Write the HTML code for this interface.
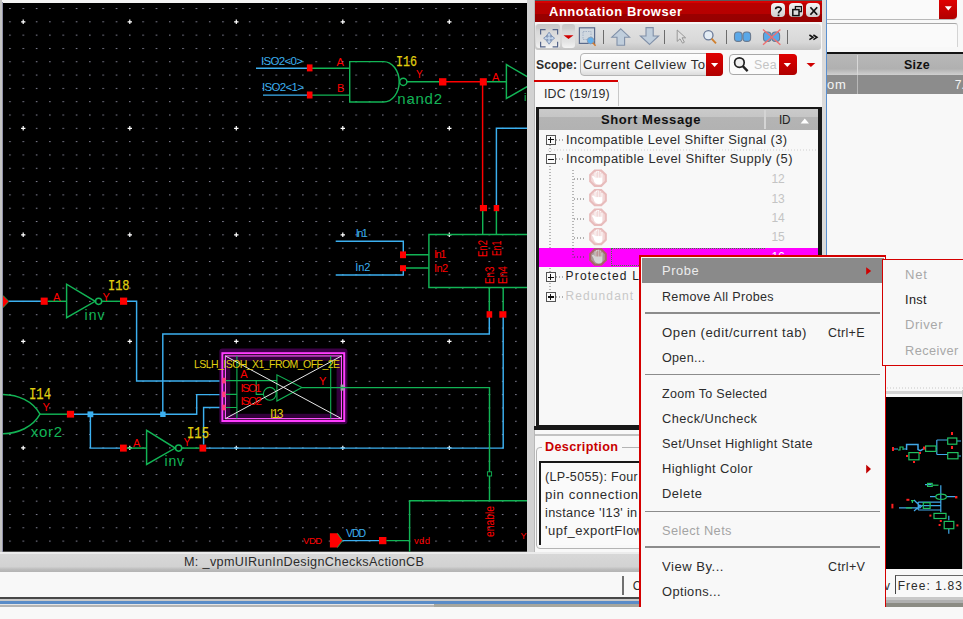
<!DOCTYPE html>
<html><head><meta charset="utf-8"><style>
html,body{margin:0;padding:0;width:963px;height:619px;overflow:hidden;background:#f8f8f8;position:relative;}
.t{position:absolute;white-space:pre;line-height:1;}
svg{position:absolute;}
</style></head><body>
<svg style="left:0;top:0" width="528" height="553" viewBox="0 0 528 553"><defs><pattern id="gd" patternUnits="userSpaceOnUse" x="9.2" y="8" width="13.315" height="13.315"><rect x="0" y="0" width="1.5" height="1" fill="#8c8ca0"/></pattern><clipPath id="cv"><rect x="3" y="3" width="524.3" height="548.7"/></clipPath></defs><rect x="0" y="0" width="528" height="553" fill="#f4f4f4"/><rect x="0" y="0" width="2" height="553" fill="#c4c4c4"/><rect x="2" y="2" width="1" height="551" fill="#9090a8"/><rect x="3" y="3" width="524.3" height="548.7" fill="#000"/><g clip-path="url(#cv)"><rect x="3" y="3" width="524.3" height="548.7" fill="url(#gd)"/><path d="M21.1,21.8H25.4M23.2,19.6V24.0" stroke="#fff" stroke-width="1.2"/><path d="M21.1,128.3H25.4M23.2,126.1V130.5" stroke="#fff" stroke-width="1.2"/><path d="M21.1,234.8H25.4M23.2,232.6V237.0" stroke="#fff" stroke-width="1.2"/><path d="M21.1,341.4H25.4M23.2,339.2V343.6" stroke="#fff" stroke-width="1.2"/><path d="M21.1,447.9H25.4M23.2,445.7V450.1" stroke="#fff" stroke-width="1.2"/><path d="M21.1,554.4H25.4M23.2,552.2V556.6" stroke="#fff" stroke-width="1.2"/><path d="M127.6,21.8H132.0M129.8,19.6V24.0" stroke="#fff" stroke-width="1.2"/><path d="M127.6,128.3H132.0M129.8,126.1V130.5" stroke="#fff" stroke-width="1.2"/><path d="M127.6,234.8H132.0M129.8,232.6V237.0" stroke="#fff" stroke-width="1.2"/><path d="M127.6,341.4H132.0M129.8,339.2V343.6" stroke="#fff" stroke-width="1.2"/><path d="M127.6,447.9H132.0M129.8,445.7V450.1" stroke="#fff" stroke-width="1.2"/><path d="M127.6,554.4H132.0M129.8,552.2V556.6" stroke="#fff" stroke-width="1.2"/><path d="M234.1,21.8H238.5M236.3,19.6V24.0" stroke="#fff" stroke-width="1.2"/><path d="M234.1,128.3H238.5M236.3,126.1V130.5" stroke="#fff" stroke-width="1.2"/><path d="M234.1,234.8H238.5M236.3,232.6V237.0" stroke="#fff" stroke-width="1.2"/><path d="M234.1,341.4H238.5M236.3,339.2V343.6" stroke="#fff" stroke-width="1.2"/><path d="M234.1,447.9H238.5M236.3,445.7V450.1" stroke="#fff" stroke-width="1.2"/><path d="M234.1,554.4H238.5M236.3,552.2V556.6" stroke="#fff" stroke-width="1.2"/><path d="M340.6,21.8H345.0M342.8,19.6V24.0" stroke="#fff" stroke-width="1.2"/><path d="M340.6,128.3H345.0M342.8,126.1V130.5" stroke="#fff" stroke-width="1.2"/><path d="M340.6,234.8H345.0M342.8,232.6V237.0" stroke="#fff" stroke-width="1.2"/><path d="M340.6,341.4H345.0M342.8,339.2V343.6" stroke="#fff" stroke-width="1.2"/><path d="M340.6,447.9H345.0M342.8,445.7V450.1" stroke="#fff" stroke-width="1.2"/><path d="M340.6,554.4H345.0M342.8,552.2V556.6" stroke="#fff" stroke-width="1.2"/><path d="M447.1,21.8H451.5M449.3,19.6V24.0" stroke="#fff" stroke-width="1.2"/><path d="M447.1,128.3H451.5M449.3,126.1V130.5" stroke="#fff" stroke-width="1.2"/><path d="M447.1,234.8H451.5M449.3,232.6V237.0" stroke="#fff" stroke-width="1.2"/><path d="M447.1,341.4H451.5M449.3,339.2V343.6" stroke="#fff" stroke-width="1.2"/><path d="M447.1,447.9H451.5M449.3,445.7V450.1" stroke="#fff" stroke-width="1.2"/><path d="M447.1,554.4H451.5M449.3,552.2V556.6" stroke="#fff" stroke-width="1.2"/><path d="M256,68.3H308M263,95.1H308" stroke="#3cb0f0" stroke-width="1.45" fill="none" /><path d="M312,68.3H349.7M312,95.1H349.7" stroke="#12b455" stroke-width="1.45" fill="none" /><rect x="306.9" y="64.4" width="5.60" height="7.00" fill="#ff0000"/><rect x="306.9" y="91.5" width="5.60" height="7.00" fill="#ff0000"/><path d="M383.6,61.6H349.7V102H383.6A15.6,20.2 0 0 0 383.6,61.6" stroke="#12b455" stroke-width="1.45" fill="none" /><circle cx="403.3" cy="81.8" r="3.6" stroke="#12b455" stroke-width="1.45" fill="none"/><path d="M407,81.7H440" stroke="#12b455" stroke-width="1.45" fill="none" /><rect x="439" y="78.2" width="7.40" height="7.30" fill="#ff0000"/><path d="M446,81.7H480" stroke="#ff0000" stroke-width="1.45" fill="none" /><rect x="479.8" y="78.2" width="7.00" height="7.30" fill="#ff0000"/><path d="M486.8,81.7H506.4" stroke="#12b455" stroke-width="1.45" fill="none" /><path d="M506.4,64.6V98.5L535.7,81.6Z" stroke="#12b455" stroke-width="1.45" fill="none" /><path d="M482.6,85V205.5" stroke="#ff0000" stroke-width="1.45" fill="none" /><rect x="479.9" y="205" width="7.10" height="6.20" fill="#ff0000"/><path d="M496.4,205.5V128.2H528" stroke="#3cb0f0" stroke-width="1.45" fill="none" /><rect x="493.7" y="205" width="5.50" height="6.20" fill="#ff0000"/><path d="M482.7,211V234.4M496.4,211V234.4" stroke="#12b455" stroke-width="1.45" fill="none" /><path d="M335.7,241.3H403.3V252M335.7,274.9H403.3V270.5" stroke="#3cb0f0" stroke-width="1.45" fill="none" /><rect x="400" y="251.4" width="6.00" height="6.80" fill="#ff0000"/><rect x="400" y="265.2" width="6.00" height="6.00" fill="#ff0000"/><path d="M406,254.8H428.9M406,268H428.9" stroke="#12b455" stroke-width="1.45" fill="none" /><path d="M528,234.4H428.9V287.5H528" stroke="#12b455" stroke-width="1.45" fill="none" /><path d="M489.3,287.5V311.5M503.2,287.5V311.5" stroke="#12b455" stroke-width="1.45" fill="none" /><rect x="486.6" y="311.2" width="5.60" height="6.50" fill="#ff0000"/><rect x="499.3" y="311.2" width="7.10" height="6.50" fill="#ff0000"/><path d="M489.3,317.5V333.9H162.8V414.3M503.2,317.5V448.1H206" stroke="#3cb0f0" stroke-width="1.45" fill="none" /><path d="M-2,295.4H3L8.9,301.4L3,307.8H-2Z" fill="#ff0000" stroke="#12b455" stroke-width="0.8"/><path d="M8.7,301.3H41" stroke="#3cb0f0" stroke-width="1.45" fill="none" /><rect x="40.7" y="297.6" width="7.00" height="7.20" fill="#ff0000"/><path d="M47.7,301.3H66.6" stroke="#12b455" stroke-width="1.45" fill="none" /><path d="M66.6,284.2V317.7L95.2,301.3Z" stroke="#12b455" stroke-width="1.45" fill="none" /><circle cx="98.6" cy="301.3" r="3.1" stroke="#12b455" stroke-width="1.45" fill="none"/><path d="M101.7,301.3H120" stroke="#12b455" stroke-width="1.45" fill="none" /><rect x="120" y="297.6" width="7.20" height="7.20" fill="#ff0000"/><path d="M127,301.3H136.6V380.9H221" stroke="#3cb0f0" stroke-width="1.45" fill="none" /><path d="M2,394.4C18,394.4 33,401 40,414.2C33,427 18,433.7 2,433.7" stroke="#12b455" stroke-width="1.45" fill="none" /><path d="M40,414.2H67" stroke="#12b455" stroke-width="1.45" fill="none" /><rect x="66.9" y="410.8" width="7.20" height="6.80" fill="#ff0000"/><path d="M74,414.3H196.7V394.6H221" stroke="#3cb0f0" stroke-width="1.45" fill="none" /><rect x="87.5" y="411.4" width="5.80" height="5.80" fill="#3cb0f0"/><rect x="160.2" y="411.6" width="5.40" height="5.40" fill="#3cb0f0"/><path d="M90.4,414.3V448.1H120" stroke="#3cb0f0" stroke-width="1.45" fill="none" /><rect x="120" y="444.6" width="6.80" height="7.00" fill="#ff0000"/><path d="M126.8,448.1H146.6" stroke="#12b455" stroke-width="1.45" fill="none" /><path d="M146.6,430.4V464.5L175.2,448.1Z" stroke="#12b455" stroke-width="1.45" fill="none" /><circle cx="178.6" cy="448.1" r="3.1" stroke="#12b455" stroke-width="1.45" fill="none"/><path d="M181.7,448.1H199.5" stroke="#12b455" stroke-width="1.45" fill="none" /><rect x="199.5" y="444.6" width="6.70" height="7.00" fill="#ff0000"/><path d="M203.6,444.6V407.5H221" stroke="#3cb0f0" stroke-width="1.45" fill="none" /><rect x="219.4" y="348.6" width="128" height="75.6" rx="3" fill="#3c0046"/><rect x="222.4" y="353.2" width="121.8" height="67.8" fill="#000" stroke="#ff3cff" stroke-width="2"/><rect x="225.4" y="356" width="116" height="62.6" fill="none" stroke="#ff50ff" stroke-width="1.4"/><rect x="228.2" y="358.8" width="110.4" height="57" fill="none" stroke="#34003c" stroke-width="4"/><path d="M236.9,356V418.6M330.7,356V418.6" stroke="#12b455" stroke-width="1.1" fill="none" /><path d="M225.4,380.6H276.9M225.4,394.4H236.9M225.4,407.5H236.9M256.2,380.6V394.4H263.5" stroke="#12b455" stroke-width="1.1" fill="none" /><circle cx="269.8" cy="393.8" r="6.4" stroke="#12b455" stroke-width="1.1" fill="none"/><path d="M276.9,374.8V401L301.9,387.6Z" stroke="#12b455" stroke-width="1.1" fill="none" /><path d="M225.4,356L341.4,418.6M341.4,356L225.4,418.6" stroke="#e8e8e8" stroke-width="1.0" fill="none" /><rect x="222.2" y="377.8" width="3.40" height="5.60" fill="#ff3c78"/><rect x="222.2" y="391.6" width="3.40" height="5.60" fill="#ff3c78"/><rect x="222.2" y="404.7" width="3.40" height="5.60" fill="#ff3c78"/><rect x="340.6" y="384.6" width="3.60" height="6.00" fill="#a0a0a8"/><path d="M301.9,387.6H489.5V500.8" stroke="#12b455" stroke-width="1.45" fill="none" /><rect x="487.4" y="471.8" width="4.2" height="4.2" fill="#000" stroke="#12b455" stroke-width="0.9"/><path d="M409.6,553V500.8H528" stroke="#12b455" stroke-width="1.45" fill="none" /><path d="M329.9,533.2H337.4L342.6,540.6L337.4,547.6H329.9Z" fill="#ff0000"/><path d="M337.4,533.2L342.6,540.6L337.4,547.6" stroke="#12b455" stroke-width="0.9" fill="none" /><path d="M342.6,540.6H379" stroke="#3cb0f0" stroke-width="1.45" fill="none" /><rect x="379" y="537" width="7.40" height="7.20" fill="#ff0000"/><path d="M386.4,540.6H409.6" stroke="#12b455" stroke-width="1.45" fill="none" /></g></svg><div class="t" style="left:261.0px;top:56.00px;font-family:'Liberation Sans', sans-serif;font-size:11.5px;font-weight:normal;color:#3cb0f0;letter-spacing:-0.674px;">ISO2&lt;0&gt;</div><div class="t" style="left:262.0px;top:82.00px;font-family:'Liberation Sans', sans-serif;font-size:11.5px;font-weight:normal;color:#3cb0f0;letter-spacing:-0.674px;">ISO2&lt;1&gt;</div><div class="t" style="left:336.6px;top:57.00px;font-family:'Liberation Sans', sans-serif;font-size:11px;font-weight:normal;color:#ff0000;letter-spacing:0.000px;">A</div><div class="t" style="left:337.0px;top:83.00px;font-family:'Liberation Sans', sans-serif;font-size:11px;font-weight:normal;color:#ff0000;letter-spacing:0.000px;">B</div><div class="t" style="left:395.7px;top:55.00px;font-family:'Liberation Mono', monospace;font-size:15px;font-weight:normal;color:#e0d010;letter-spacing:0.000px;transform-origin:0 0;transform:scaleX(0.7773);-webkit-text-stroke:0.25px currentColor;">I16</div><div class="t" style="left:416.0px;top:70.00px;font-family:'Liberation Sans', sans-serif;font-size:10px;font-weight:normal;color:#ff0000;letter-spacing:0.000px;">Y</div><div class="t" style="left:397.3px;top:91.00px;font-family:'Liberation Sans', sans-serif;font-size:15px;font-weight:normal;color:#12b455;letter-spacing:0.745px;">nand2</div><div class="t" style="left:492.0px;top:72.00px;font-family:'Liberation Sans', sans-serif;font-size:11px;font-weight:normal;color:#ff0000;letter-spacing:0.000px;">A</div><div class="t" style="left:524.0px;top:92.00px;font-family:'Liberation Sans', sans-serif;font-size:11px;font-weight:normal;color:#12b455;letter-spacing:0.000px;">i</div><div class="t" style="left:355.8px;top:228.00px;font-family:'Liberation Sans', sans-serif;font-size:11px;font-weight:normal;color:#3cb0f0;letter-spacing:-1.648px;">In1</div><div class="t" style="left:355.3px;top:262.00px;font-family:'Liberation Sans', sans-serif;font-size:11px;font-weight:normal;color:#3cb0f0;letter-spacing:-0.148px;">In2</div><div class="t" style="left:433.9px;top:249.00px;font-family:'Liberation Sans', sans-serif;font-size:11px;font-weight:normal;color:#ff0000;letter-spacing:-1.398px;">In1</div><div class="t" style="left:434.0px;top:263.00px;font-family:'Liberation Sans', sans-serif;font-size:11px;font-weight:normal;color:#ff0000;letter-spacing:-0.648px;">In2</div><div class="t" style="left:53.0px;top:292.00px;font-family:'Liberation Sans', sans-serif;font-size:11px;font-weight:normal;color:#ff0000;letter-spacing:0.000px;">A</div><div class="t" style="left:102.5px;top:292.00px;font-family:'Liberation Sans', sans-serif;font-size:11px;font-weight:normal;color:#ff0000;letter-spacing:0.000px;">Y</div><div class="t" style="left:107.5px;top:279.00px;font-family:'Liberation Mono', monospace;font-size:14px;font-weight:normal;color:#e0d010;letter-spacing:0.000px;transform-origin:0 0;transform:scaleX(0.8525);-webkit-text-stroke:0.25px currentColor;">I18</div><div class="t" style="left:84.6px;top:308.00px;font-family:'Liberation Sans', sans-serif;font-size:14px;font-weight:normal;color:#12b455;letter-spacing:0.947px;">inv</div><div class="t" style="left:28.8px;top:387.00px;font-family:'Liberation Mono', monospace;font-size:16.5px;font-weight:normal;color:#e0d010;letter-spacing:0.000px;transform-origin:0 0;transform:scaleX(0.7403);-webkit-text-stroke:0.25px currentColor;">I14</div><div class="t" style="left:42.4px;top:402.00px;font-family:'Liberation Sans', sans-serif;font-size:11px;font-weight:normal;color:#ff0000;letter-spacing:0.000px;">Y</div><div class="t" style="left:30.8px;top:424.00px;font-family:'Liberation Sans', sans-serif;font-size:15px;font-weight:normal;color:#12b455;letter-spacing:0.737px;">xor2</div><div class="t" style="left:133.0px;top:438.00px;font-family:'Liberation Sans', sans-serif;font-size:11px;font-weight:normal;color:#ff0000;letter-spacing:0.000px;">A</div><div class="t" style="left:183.5px;top:437.00px;font-family:'Liberation Sans', sans-serif;font-size:10.5px;font-weight:normal;color:#ff0000;letter-spacing:0.000px;">Y</div><div class="t" style="left:186.9px;top:426.00px;font-family:'Liberation Mono', monospace;font-size:16px;font-weight:normal;color:#e0d010;letter-spacing:0.000px;transform-origin:0 0;transform:scaleX(0.7636);-webkit-text-stroke:0.25px currentColor;">I15</div><div class="t" style="left:164.6px;top:454.00px;font-family:'Liberation Sans', sans-serif;font-size:14px;font-weight:normal;color:#12b455;letter-spacing:0.747px;">inv</div><div class="t" style="left:194.0px;top:359.00px;font-family:'Liberation Sans', sans-serif;font-size:10.5px;font-weight:normal;color:#e0d010;letter-spacing:-0.554px;">LSLH_ISOH_X1_FROM_OFF_2E</div><div class="t" style="left:240.2px;top:369.00px;font-family:'Liberation Sans', sans-serif;font-size:11px;font-weight:normal;color:#ff0000;letter-spacing:0.000px;">A</div><div class="t" style="left:240.5px;top:383.00px;font-family:'Liberation Sans', sans-serif;font-size:11.5px;font-weight:normal;color:#ff0000;letter-spacing:-1.740px;">ISO1</div><div class="t" style="left:240.5px;top:396.00px;font-family:'Liberation Sans', sans-serif;font-size:11.5px;font-weight:normal;color:#ff0000;letter-spacing:-1.573px;">ISO2</div><div class="t" style="left:319.0px;top:376.00px;font-family:'Liberation Sans', sans-serif;font-size:11px;font-weight:normal;color:#ff0000;letter-spacing:0.000px;">Y</div><div class="t" style="left:269.9px;top:408.00px;font-family:'Liberation Sans', sans-serif;font-size:12px;font-weight:normal;color:#e0d010;letter-spacing:-1.594px;">I13</div><div class="t" style="left:303.1px;top:536.00px;font-family:'Liberation Sans', sans-serif;font-size:9.5px;font-weight:normal;color:#ff0000;letter-spacing:-0.531px;">VDD</div><div class="t" style="left:346.0px;top:528.00px;font-family:'Liberation Sans', sans-serif;font-size:10.5px;font-weight:normal;color:#3cb0f0;letter-spacing:-1.086px;">VDD</div><div class="t" style="left:414.0px;top:536.00px;font-family:'Liberation Sans', sans-serif;font-size:9.5px;font-weight:normal;color:#ff0000;letter-spacing:0.336px;">vdd</div><div class="t" style="left:520.5px;top:532.00px;font-family:'Liberation Sans', sans-serif;font-size:9px;font-weight:normal;color:#ff0000;letter-spacing:0.000px;">Y</div><div class="t" style="left:476.9px;top:257.00px;font-family:'Liberation Sans', sans-serif;font-size:12.17px;font-weight:normal;color:#ff0000;letter-spacing:0.000px;transform-origin:0 0;transform:rotate(-90deg) scaleX(0.7856);">En2</div><div class="t" style="left:490.1px;top:256.00px;font-family:'Liberation Sans', sans-serif;font-size:13.33px;font-weight:normal;color:#ff0000;letter-spacing:0.000px;transform-origin:0 0;transform:rotate(-90deg) scaleX(0.6493);">En1</div><div class="t" style="left:483.8px;top:283.60px;font-family:'Liberation Sans', sans-serif;font-size:12.32px;font-weight:normal;color:#ff0000;letter-spacing:0.000px;transform-origin:0 0;transform:rotate(-90deg) scaleX(0.7937);">En3</div><div class="t" style="left:496.6px;top:284.00px;font-family:'Liberation Sans', sans-serif;font-size:12.9px;font-weight:normal;color:#ff0000;letter-spacing:0.000px;transform-origin:0 0;transform:rotate(-90deg) scaleX(0.7847);">En4</div><div class="t" style="left:484.0px;top:536.90px;font-family:'Liberation Sans', sans-serif;font-size:12.17px;font-weight:normal;color:#ff0000;letter-spacing:0.000px;transform-origin:0 0;transform:rotate(-90deg) scaleX(0.8490);">enable</div><div style="position:absolute;left:527.3px;top:0px;width:6.5px;height:553px;background:#d2d2d2;"></div><div style="position:absolute;left:533.8px;top:0px;width:0.8px;height:553px;background:#b8b8b8;"></div><div style="position:absolute;left:534.6px;top:0px;width:291.4px;height:553px;background:#f8f8f8;"></div><div style="position:absolute;left:821.5px;top:0px;width:4.3px;height:553px;background:#dadada;"></div><div style="position:absolute;left:825.6px;top:0px;width:1.2px;height:553px;background:#5a90d0;"></div><div style="position:absolute;left:534.6px;top:0px;width:287px;height:1.2px;background:#5a5a5a;"></div><div style="position:absolute;left:534.6px;top:1.2px;width:287px;height:20.4px;background:linear-gradient(#dc0000 0,#d80000 7%,#b80000 12%,#b60000 60%,#9a0000 63%,#960000 100%);"></div><div style="position:absolute;left:534.6px;top:21.5px;width:287px;height:1.0px;background:#585e60;"></div><div class="t" style="left:549.3px;top:6.00px;font-family:'Liberation Sans', sans-serif;font-size:12px;font-weight:bold;color:#fff;letter-spacing:0.499px;transform-origin:0 0;transform:scaleX(1.0799);">Annotation Browser</div><div style="position:absolute;left:771.4px;top:3.4px;width:13.6px;height:13.8px;background:linear-gradient(#f4f4f4,#d0d0d0);border-radius:4px;"></div><div style="position:absolute;left:789.0px;top:3.4px;width:13.6px;height:13.8px;background:linear-gradient(#f4f4f4,#d0d0d0);border-radius:4px;"></div><div style="position:absolute;left:806.2px;top:3.4px;width:13.6px;height:13.8px;background:linear-gradient(#f4f4f4,#d0d0d0);border-radius:4px;"></div><svg style="left:771px;top:3px" width="50" height="15" viewBox="0 0 50 15"><path d="M4.6,6.2C4.6,3.6 10.2,3.4 10.2,6C10.2,7.8 7.6,8 7.4,10.4" stroke="#111" stroke-width="1.6" fill="none"/><rect x="6.6" y="11.6" width="1.8" height="1.6" fill="#111"/><rect x="24.4" y="3.6" width="6" height="5" fill="none" stroke="#111" stroke-width="1.3"/><rect x="21.8" y="6.6" width="6.2" height="6" fill="#ddd" stroke="#111" stroke-width="1.5"/><path d="M39.4,4.2L46.2,11.8M46.2,4.2L39.4,11.8" stroke="#111" stroke-width="1.7"/></svg><div style="position:absolute;left:534.6px;top:22.4px;width:287px;height:1.8px;background:#f6f6f6;"></div><div style="position:absolute;left:535.4px;top:24.2px;width:286px;height:25.4px;background:linear-gradient(#e2e2e2,#d8d8d8 70%,#c4c4c4);border-radius:3px;"></div><div style="position:absolute;left:536.2px;top:24.4px;width:23.6px;height:23.8px;background:linear-gradient(#c6c6c6,#cccccc 18%,#d8d8d8 30%,#e4e4e4 75%,#f4f4f4);border-radius:3px;"></div><div style="position:absolute;left:561.6px;top:24.4px;width:13px;height:23.8px;background:linear-gradient(#c6c6c6,#cccccc 18%,#d8d8d8 30%,#e4e4e4 75%,#f4f4f4);border-radius:3px;"></div><div style="position:absolute;left:602.9px;top:30px;width:1.2px;height:13.8px;background:#6c6c6c;"></div><div style="position:absolute;left:664.1999999999999px;top:30px;width:1.2px;height:13.8px;background:#6c6c6c;"></div><div style="position:absolute;left:725.6999999999999px;top:30px;width:1.2px;height:13.8px;background:#6c6c6c;"></div><div style="position:absolute;left:786.6px;top:30px;width:1.2px;height:13.8px;background:#6c6c6c;"></div><svg style="left:534px;top:22px" width="288" height="28" viewBox="0 0 288 28"><g stroke="#55658a" stroke-width="1.2" fill="none"><path d="M6.6,12.6V7.6H11.6M18.6,7.6H23.6V12.6M23.6,19.8V24.8H18.6M11.6,24.8H6.6V19.8"/></g><path d="M15.1,10.2L17.6,13.6H16.2V15H17.6V13.8L20.6,16.2L17.6,18.6V17.4H16.2V18.8H17.6L15.1,22.2L12.6,18.8H14V17.4H12.6V18.6L9.6,16.2L12.6,13.8V15H14V13.6H12.6Z" fill="#c4d4e8" stroke="#7088b0" stroke-width="0.8"/><path d="M29.5,13.2H39.5L34.5,17Z" fill="#d00000"/><rect x="45.4" y="5.8" width="15.2" height="15.6" fill="#d0d8e0" stroke="#5a6a8a" stroke-width="1.2"/><path d="M49,9.5H57V17.5H49Z" fill="none" stroke="#98a8c0" stroke-width="0.8" stroke-dasharray="1.5,1"/><circle cx="56.6" cy="18.6" r="3.3" fill="#60b0ee" stroke="#8898b0" stroke-width="0.9"/><path d="M58.8,20.8L61.6,23.8" stroke="#d07a30" stroke-width="1.6"/><path d="M86.8,6.8L95.6,15.2H90.6V23.2H83V15.2H77.8Z" fill="#c0cedc" stroke="#8090a8" stroke-width="1.1"/><path d="M115.6,22.4L124.6,14H119.2V5.6H112V14H106.4Z" fill="#c0cedc" stroke="#8090a8" stroke-width="1.1"/><path d="M143.2,8V19.4L146,16.8L148.6,21.2L150.4,20.2L148,15.8H151.6Z" fill="#e0e0e0" stroke="#909090" stroke-width="0.9"/><circle cx="174.4" cy="13.2" r="4.6" fill="#e4ecf4" stroke="#6a7a98" stroke-width="1.3"/><path d="M177.6,16.6L182,21.4" stroke="#d08030" stroke-width="1.9"/><g fill="#5aa8e8" stroke="#6a7a90" stroke-width="1.1"><rect x="200.5" y="10" width="7.6" height="9.4" rx="3.2"/><rect x="209" y="10" width="7.6" height="9.4" rx="3.2"/></g><g fill="#5aa8e8" stroke="#6a7a90" stroke-width="1.1"><rect x="229.5" y="10" width="7.6" height="9.4" rx="3.2"/><rect x="238" y="10" width="7.6" height="9.4" rx="3.2"/></g><path d="M229,7.4L246.4,22.8M246.4,7.4L229,22.8" stroke="#f07070" stroke-width="1.4"/><path d="M275.4,13L279,15.3L275.4,17.6M279.4,13L283,15.3L279.4,17.6" stroke="#111" stroke-width="1.5" fill="none"/></svg><div class="t" style="left:535.5px;top:59.00px;font-family:'Liberation Sans', sans-serif;font-size:12px;font-weight:bold;color:#2c2c2c;letter-spacing:0.097px;transform-origin:0 0;transform:scaleX(1.0123);">Scope:</div><div style="position:absolute;left:580.2px;top:52.8px;width:143.3px;height:23.4px;background:linear-gradient(#fdfdfd,#f2f2f2 70%,#dcdcdc);border-radius:4px;border:1px solid #b4b4b4;box-sizing:border-box;"></div><div class="t" style="left:583.0px;top:59.00px;font-family:'Liberation Sans', sans-serif;font-size:12px;font-weight:normal;color:#2c2c2c;letter-spacing:0.464px;transform-origin:0 0;transform:scaleX(1.0875);">Current Cellview To</div><div style="position:absolute;left:706.2px;top:53.3px;width:17.3px;height:22.6px;background:linear-gradient(#e00000,#b00000);border-radius:0 4px 4px 0;"></div><div style="position:absolute;left:728.8px;top:54.2px;width:68px;height:21.2px;background:#fbfbfb;border-radius:4px;border:1px solid #a8a8a8;box-sizing:border-box;"></div><svg style="left:732px;top:56px" width="20" height="18" viewBox="0 0 20 18"><circle cx="7.4" cy="6.6" r="4.8" fill="#f0f0f0" stroke="#222" stroke-width="1.7"/><path d="M10.8,10.2L15.6,15.2" stroke="#222" stroke-width="2.4"/></svg><div class="t" style="left:753.6px;top:59.00px;font-family:'Liberation Sans', sans-serif;font-size:12px;font-weight:normal;color:#c4c4c4;letter-spacing:0.278px;transform-origin:0 0;transform:scaleX(1.0267);">Sea</div><div style="position:absolute;left:778.6px;top:54.2px;width:18.2px;height:21.2px;background:linear-gradient(#e00000,#b00000);border-radius:0 4px 4px 0;"></div><svg style="left:705px;top:60px" width="115" height="10" viewBox="0 0 115 10"><path d="M6,3H13.2L9.6,7Z" fill="#fff"/><path d="M78.6,3H86L82.3,7Z" fill="#fff"/><path d="M101.5,3H110.3L105.9,7Z" fill="#d00000"/></svg><div style="position:absolute;left:533.9px;top:79.6px;width:84.1px;height:2.4px;background:#d40000;"></div><div style="position:absolute;left:617.6px;top:82px;width:0.9px;height:24px;background:#c8c8c8;"></div><div class="t" style="left:543.7px;top:88.00px;font-family:'Liberation Sans', sans-serif;font-size:12px;font-weight:normal;color:#2c2c2c;letter-spacing:0.178px;transform-origin:0 0;transform:scaleX(1.0296);">IDC (19/19)</div><div style="position:absolute;left:536.4px;top:107px;width:285.2px;height:323px;background:#181818;"></div><div style="position:absolute;left:538.7px;top:109.3px;width:278.9px;height:316.2px;background:#f8f8f8;"></div><div style="position:absolute;left:538.7px;top:109.3px;width:278.9px;height:20.3px;background:linear-gradient(#cacaca 0,#c6c6c6 36%,#b4b4b4 40%,#b2b2b2 100%);"></div><div style="position:absolute;left:764.4px;top:110px;width:1.2px;height:19px;background:#d4d4d4;"></div><div class="t" style="left:600.8px;top:114.00px;font-family:'Liberation Sans', sans-serif;font-size:12px;font-weight:bold;color:#111;letter-spacing:0.544px;transform-origin:0 0;transform:scaleX(1.0828);">Short Message</div><div class="t" style="left:778.9px;top:114.00px;font-family:'Liberation Sans', sans-serif;font-size:12px;font-weight:normal;color:#222;letter-spacing:-0.308px;transform-origin:0 0;transform:scaleX(0.9750);">ID</div><svg style="left:800px;top:118px" width="10" height="6" viewBox="0 0 10 6"><path d="M0.6,5.4L4.8,0.6L9,5.4Z" fill="#fff"/></svg><svg style="left:548px;top:149.2px" width="269" height="2"><path d="M0,1H269" stroke="#d0d0d0" stroke-width="1" stroke-dasharray="1,2"/></svg><svg style="left:549px;top:145px" width="2" height="147"><path d="M1,0V147" stroke="#777" stroke-width="1" stroke-dasharray="1,2"/></svg><svg style="left:556px;top:138.6px" width="7" height="2"><path d="M0,1H7" stroke="#666" stroke-width="1" stroke-dasharray="1,2"/></svg><svg style="left:556px;top:158.2px" width="7" height="2"><path d="M0,1H7" stroke="#666" stroke-width="1" stroke-dasharray="1,2"/></svg><svg style="left:556px;top:276.3px" width="7" height="2"><path d="M0,1H7" stroke="#666" stroke-width="1" stroke-dasharray="1,2"/></svg><svg style="left:556px;top:295.8px" width="7" height="2"><path d="M0,1H7" stroke="#666" stroke-width="1" stroke-dasharray="1,2"/></svg><svg style="left:572px;top:170px" width="2" height="87.5"><path d="M1,0V87.5" stroke="#777" stroke-width="1" stroke-dasharray="1,2"/></svg><svg style="left:574px;top:178.4px" width="12" height="2"><path d="M0,1H12" stroke="#666" stroke-width="1" stroke-dasharray="1,2"/></svg><svg style="left:574px;top:197.7px" width="12" height="2"><path d="M0,1H12" stroke="#666" stroke-width="1" stroke-dasharray="1,2"/></svg><svg style="left:574px;top:217.5px" width="12" height="2"><path d="M0,1H12" stroke="#666" stroke-width="1" stroke-dasharray="1,2"/></svg><svg style="left:574px;top:236.8px" width="12" height="2"><path d="M0,1H12" stroke="#666" stroke-width="1" stroke-dasharray="1,2"/></svg><svg style="left:574px;top:256.3px" width="12" height="2"><path d="M0,1H12" stroke="#666" stroke-width="1" stroke-dasharray="1,2"/></svg><div style="position:absolute;left:538.7px;top:247.9px;width:278.9px;height:19.5px;background:#ff00ff;"></div><div style="position:absolute;left:610.7px;top:248.4px;width:154px;height:18px;box-sizing:border-box;border:1px dotted #3a8a3a;border-right:none"></div><svg style="left:572px;top:248px" width="2" height="9.5"><path d="M1,0V9.5" stroke="#444" stroke-width="1" stroke-dasharray="1,2"/></svg><svg style="left:574px;top:256.3px" width="12" height="2"><path d="M0,1H12" stroke="#444" stroke-width="1" stroke-dasharray="1,2"/></svg><div style="position:absolute;left:545.6px;top:134.6px;width:10px;height:10px;box-sizing:border-box;border:1px solid #555;background:#fafafa"></div><div style="position:absolute;left:547.6px;top:138.9px;width:6px;height:1.4px;background:#111"></div><div style="position:absolute;left:549.9px;top:136.6px;width:1.4px;height:6px;background:#111"></div><div style="position:absolute;left:545.6px;top:154.4px;width:10px;height:10px;box-sizing:border-box;border:1px solid #555;background:#fafafa"></div><div style="position:absolute;left:547.6px;top:158.70000000000002px;width:6px;height:1.4px;background:#111"></div><div style="position:absolute;left:545.7px;top:272.2px;width:10px;height:10px;box-sizing:border-box;border:1px solid #555;background:#fafafa"></div><div style="position:absolute;left:547.7px;top:276.5px;width:6px;height:1.4px;background:#111"></div><div style="position:absolute;left:550.0px;top:274.2px;width:1.4px;height:6px;background:#111"></div><div style="position:absolute;left:545.7px;top:292px;width:10px;height:10px;box-sizing:border-box;border:1px solid #555;background:#fafafa"></div><div style="position:absolute;left:547.7px;top:296.3px;width:6px;height:1.4px;background:#111"></div><div style="position:absolute;left:550.0px;top:294px;width:1.4px;height:6px;background:#111"></div><div class="t" style="left:565.5px;top:134.00px;font-family:'Liberation Sans', sans-serif;font-size:12px;font-weight:normal;color:#2c2c2c;letter-spacing:0.365px;transform-origin:0 0;transform:scaleX(1.0732);">Incompatible Level Shifter Signal (3)</div><div class="t" style="left:565.5px;top:153.00px;font-family:'Liberation Sans', sans-serif;font-size:12px;font-weight:normal;color:#2c2c2c;letter-spacing:0.392px;transform-origin:0 0;transform:scaleX(1.0775);">Incompatible Level Shifter Supply (5)</div><div class="t" style="left:565.5px;top:270.00px;font-family:'Liberation Sans', sans-serif;font-size:12px;font-weight:normal;color:#222;letter-spacing:0.000px;letter-spacing:1.2px">Protected Level Shifter</div><div class="t" style="left:565.5px;top:290.00px;font-family:'Liberation Sans', sans-serif;font-size:12px;font-weight:normal;color:#c8c8c8;letter-spacing:0.000px;letter-spacing:1.1px">Redundant Level Shifter</div><svg style="left:583.5px;top:160px" width="30" height="110" viewBox="0 0 30 110"><polygon points="22.87,21.80 17.67,26.88 10.33,26.88 5.13,21.80 5.13,14.60 10.33,9.52 17.67,9.52 22.87,14.60" fill="#e8bcbc"/><polygon points="20.84,20.96 16.83,24.85 11.17,24.85 7.16,20.96 7.16,15.44 11.17,11.55 16.83,11.55 20.84,15.44" fill="#f2d8d8"/><path d="M9.4,19.2L7.8,16.6L9.4,15.8L10.6,17.4V12.4H12.1V16.7V11.2H13.7V16.7V11.0H15.3V16.7V12.0H16.9V16.7V13.6H18.4V21.4Q18.4,24.6 14.4,24.6Q10.6,24.6 9.4,19.2Z" fill="#ffffff"/><path d="M12.1,12.7V17.7M13.7,11.7V17.7M15.3,11.7V17.7M16.9,12.7V17.7" stroke="#e8bcbc" stroke-width="0.7"/><polygon points="22.87,41.20 17.67,46.28 10.33,46.28 5.13,41.20 5.13,34.00 10.33,28.92 17.67,28.92 22.87,34.00" fill="#e8bcbc"/><polygon points="20.84,40.36 16.83,44.25 11.17,44.25 7.16,40.36 7.16,34.84 11.17,30.95 16.83,30.95 20.84,34.84" fill="#f2d8d8"/><path d="M9.4,38.6L7.8,36.0L9.4,35.2L10.6,36.8V31.8H12.1V36.1V30.6H13.7V36.1V30.4H15.3V36.1V31.4H16.9V36.1V33.0H18.4V40.8Q18.4,44.0 14.4,44.0Q10.6,44.0 9.4,38.6Z" fill="#ffffff"/><path d="M12.1,32.1V37.1M13.7,31.1V37.1M15.3,31.1V37.1M16.9,32.1V37.1" stroke="#e8bcbc" stroke-width="0.7"/><polygon points="22.87,60.90 17.67,65.98 10.33,65.98 5.13,60.90 5.13,53.70 10.33,48.62 17.67,48.62 22.87,53.70" fill="#e8bcbc"/><polygon points="20.84,60.06 16.83,63.95 11.17,63.95 7.16,60.06 7.16,54.54 11.17,50.65 16.83,50.65 20.84,54.54" fill="#f2d8d8"/><path d="M9.4,58.3L7.8,55.7L9.4,54.9L10.6,56.5V51.5H12.1V55.8V50.3H13.7V55.8V50.1H15.3V55.8V51.1H16.9V55.8V52.7H18.4V60.5Q18.4,63.7 14.4,63.7Q10.6,63.7 9.4,58.3Z" fill="#ffffff"/><path d="M12.1,51.8V56.8M13.7,50.8V56.8M15.3,50.8V56.8M16.9,51.8V56.8" stroke="#e8bcbc" stroke-width="0.7"/><polygon points="22.87,80.20 17.67,85.28 10.33,85.28 5.13,80.20 5.13,73.00 10.33,67.92 17.67,67.92 22.87,73.00" fill="#e8bcbc"/><polygon points="20.84,79.36 16.83,83.25 11.17,83.25 7.16,79.36 7.16,73.84 11.17,69.95 16.83,69.95 20.84,73.84" fill="#f2d8d8"/><path d="M9.4,77.6L7.8,75.0L9.4,74.2L10.6,75.8V70.8H12.1V75.1V69.6H13.7V75.1V69.4H15.3V75.1V70.4H16.9V75.1V72.0H18.4V79.8Q18.4,83.0 14.4,83.0Q10.6,83.0 9.4,77.6Z" fill="#ffffff"/><path d="M12.1,71.1V76.1M13.7,70.1V76.1M15.3,70.1V76.1M16.9,71.1V76.1" stroke="#e8bcbc" stroke-width="0.7"/><polygon points="22.87,100.60 17.67,105.68 10.33,105.68 5.13,100.60 5.13,93.40 10.33,88.32 17.67,88.32 22.87,93.40" fill="#a86464"/><polygon points="20.84,99.76 16.83,103.65 11.17,103.65 7.16,99.76 7.16,94.24 11.17,90.35 16.83,90.35 20.84,94.24" fill="#a89898"/><path d="M9.4,98.0L7.8,95.4L9.4,94.6L10.6,96.2V91.2H12.1V95.5V90.0H13.7V95.5V89.8H15.3V95.5V90.8H16.9V95.5V92.4H18.4V100.2Q18.4,103.4 14.4,103.4Q10.6,103.4 9.4,98.0Z" fill="#d4d4d4"/><path d="M12.1,91.5V96.5M13.7,90.5V96.5M15.3,90.5V96.5M16.9,91.5V96.5" stroke="#a86464" stroke-width="0.7"/></svg><div class="t" style="left:771.4px;top:173.00px;font-family:'Liberation Sans', sans-serif;font-size:12px;font-weight:normal;color:#c4c4c4;letter-spacing:0.000px;">12</div><div class="t" style="left:771.4px;top:193.00px;font-family:'Liberation Sans', sans-serif;font-size:12px;font-weight:normal;color:#c4c4c4;letter-spacing:0.000px;">13</div><div class="t" style="left:771.4px;top:212.00px;font-family:'Liberation Sans', sans-serif;font-size:12px;font-weight:normal;color:#c4c4c4;letter-spacing:0.000px;">14</div><div class="t" style="left:771.4px;top:231.00px;font-family:'Liberation Sans', sans-serif;font-size:12px;font-weight:normal;color:#c4c4c4;letter-spacing:0.000px;">15</div><div class="t" style="left:771.4px;top:251.00px;font-family:'Liberation Sans', sans-serif;font-size:12px;font-weight:normal;color:#ffffff;letter-spacing:0.000px;">16</div><div style="position:absolute;left:534.4px;top:425.5px;width:287.2px;height:4.2px;background:#181818;"></div><div style="position:absolute;left:534.6px;top:434.4px;width:287px;height:1.6px;background:#c2c2c2;"></div><div style="position:absolute;left:535.6px;top:446.5px;width:330px;height:102px;box-sizing:border-box;border:1px solid #b4b4b4;border-radius:4px"></div><div style="position:absolute;left:542px;top:440px;width:80px;height:10px;background:#f8f8f8;"></div><div class="t" style="left:545.2px;top:441.00px;font-family:'Liberation Sans', sans-serif;font-size:12px;font-weight:bold;color:#c80000;letter-spacing:0.332px;transform-origin:0 0;transform:scaleX(1.0529);">Description</div><div style="position:absolute;left:539.3px;top:460.9px;width:300px;height:84.5px;background:#181818;"></div><div style="position:absolute;left:541.3px;top:462.9px;width:298px;height:82px;background:#fafafa;"></div><div class="t" style="left:545.3px;top:471.00px;font-family:'Liberation Sans', sans-serif;font-size:12px;font-weight:normal;color:#2c2c2c;letter-spacing:0.275px;transform-origin:0 0;transform:scaleX(1.0463);">(LP-5055): Fou</div><div class="t" style="left:633.4px;top:471.00px;font-family:'Liberation Sans', sans-serif;font-size:12px;font-weight:normal;color:#2c2c2c;letter-spacing:0.000px;">r</div><div class="t" style="left:545.3px;top:489.00px;font-family:'Liberation Sans', sans-serif;font-size:12px;font-weight:normal;color:#2c2c2c;letter-spacing:0.552px;transform-origin:0 0;transform:scaleX(1.1021);">pin connection</div><div class="t" style="left:545.3px;top:507.00px;font-family:'Liberation Sans', sans-serif;font-size:12px;font-weight:normal;color:#2c2c2c;letter-spacing:0.301px;transform-origin:0 0;transform:scaleX(1.0624);">instance 'I13' in</div><div class="t" style="left:545.3px;top:525.00px;font-family:'Liberation Sans', sans-serif;font-size:12px;font-weight:normal;color:#2c2c2c;letter-spacing:0.452px;transform-origin:0 0;transform:scaleX(1.0841);">'upf_exportFlo</div><div class="t" style="left:633.4px;top:525.00px;font-family:'Liberation Sans', sans-serif;font-size:12px;font-weight:normal;color:#2c2c2c;letter-spacing:0.000px;">w</div><div style="position:absolute;left:826.8px;top:0px;width:136.2px;height:553px;background:#f8f8f8;"></div><div style="position:absolute;left:827px;top:0px;width:130px;height:19.7px;background:#fafafa;border-bottom:1px solid #b8b8b8;border-right:1px solid #c8c8c8;box-sizing:border-box;border-radius:0 0 4px 0"></div><div style="position:absolute;left:938.6px;top:0px;width:18.2px;height:19.4px;background:linear-gradient(#e00000,#b00000);border-radius:0 0 4px 0;"></div><svg style="left:944px;top:5px" width="9" height="7" viewBox="0 0 9 7"><path d="M0.8,1.2H7.8L4.3,5.4Z" fill="#fff"/></svg><div style="position:absolute;left:827px;top:23.4px;width:131px;height:23.4px;background:#fafafa;border-top:1.2px solid #a8a8a8;border-right:1px solid #d4d4d4;box-sizing:border-box;border-radius:0 3px 0 0"></div><div style="position:absolute;left:827px;top:51.7px;width:136px;height:2.4px;background:#141414;"></div><div style="position:absolute;left:827px;top:54.1px;width:136px;height:21px;background:linear-gradient(#b8b8b8,#b0b0b0 70%,#d0d0d0);"></div><div style="position:absolute;left:856.6px;top:55px;width:1.2px;height:20px;background:#d8d8d8;"></div><div class="t" style="left:904.3px;top:59.00px;font-family:'Liberation Sans', sans-serif;font-size:12px;font-weight:bold;color:#111;letter-spacing:0.271px;transform-origin:0 0;transform:scaleX(1.0351);">Size</div><div style="position:absolute;left:827px;top:75.1px;width:136px;height:18.6px;background:#8c8c8c;"></div><div style="position:absolute;left:856.6px;top:75.1px;width:1px;height:18.6px;background:#b8b8b8;"></div><div class="t" style="left:827.0px;top:79.00px;font-family:'Liberation Sans', sans-serif;font-size:12.5px;font-weight:normal;color:#f4f4f4;letter-spacing:0.638px;transform-origin:0 0;transform:scaleX(1.0381);">om</div><div class="t" style="left:954.7px;top:79.00px;font-family:'Liberation Sans', sans-serif;font-size:12px;font-weight:normal;color:#f4f4f4;letter-spacing:0.000px;">7.</div><svg style="left:827px;top:386.6px" width="136" height="2"><path d="M0,1H136" stroke="#c8c8c8" stroke-width="1" stroke-dasharray="1,2"/></svg><div style="position:absolute;left:827px;top:390.6px;width:136px;height:3.4px;background:#d4d4d4;"></div><div style="position:absolute;left:886px;top:397.3px;width:75.6px;height:171.7px;background:#000;"></div><div style="position:absolute;left:961.6px;top:390px;width:1.4px;height:180px;background:#c8c8c8;"></div><svg style="left:886px;top:397px" width="76" height="172" viewBox="886 397 76 172"><g fill="none" stroke-width="1.2"><path d="M893,449H898M903,449H906.6M936,448.6H936.8M936.8,440V454.5M936.8,440H947.7M936.8,454.5H947.7M957,441H961M958,456H961" stroke="#40a8e8"/><path d="M906.6,450V444.4H918V449.6L920.4,450.6L924,448.6" stroke="#40a8e8" stroke-width="1.5"/><path d="M898,450H900V447H903V450" stroke="#20c060"/><rect x="908.9" y="452.6" width="10.1" height="7.2" stroke="#20c060"/><rect x="925.6" y="446" width="10.4" height="5.4" stroke="#20c060"/><rect x="947.7" y="438" width="9.1" height="6.2" stroke="#20c060"/><rect x="947.7" y="452.6" width="10.3" height="6.2" stroke="#20c060"/><path d="M925,484.6H931.6" stroke="#40a8e8"/><rect x="927.6" y="483.4" width="4.6" height="3" stroke="#20c060"/><path d="M933,485.2H938.5" stroke="#20c060"/><path d="M940.8,485.2V512.3M930,496.6H935.8M946.5,496.6H955M918.2,502.1H940.8M918.2,510H940.8M918.2,502.1V510M899,507.8H920L922,505.6H940.8M914,500L920,506M914,511L921,505M948.8,515.7V520.2M948.8,528.7V533.8" stroke="#40a8e8"/><ellipse cx="941.1" cy="496.8" rx="5.3" ry="2.6" stroke="#20c060"/><rect x="923.3" y="502.7" width="6.8" height="5.7" stroke="#20c060"/><rect x="934" y="513.4" width="12" height="5.1" stroke="#20c060"/><rect x="944.2" y="521.4" width="9.6" height="7.3" stroke="#20c060"/><path d="M906,507.8H912M911,500.6H914M912.4,500.6V503" stroke="#20c060"/></g><g fill="#ff2020"><rect x="892" y="447" width="2" height="4"/><rect x="923" y="446.6" width="2.4" height="3"/><rect x="906" y="455" width="2" height="2"/><rect x="919" y="452" width="2" height="2"/><rect x="951" y="432" width="2" height="3"/><rect x="951" y="446" width="2" height="3"/><rect x="913" y="461" width="2" height="2"/><rect x="891.4" y="503.8" width="2" height="4.6"/><rect x="955" y="496" width="2.4" height="2.4"/><rect x="929.4" y="514.6" width="2" height="2"/><rect x="939.8" y="520" width="2" height="2"/><rect x="938.6" y="524" width="2" height="2"/><rect x="956.4" y="524.4" width="2" height="2"/><rect x="906.4" y="498.8" width="3" height="2"/></g></svg><div style="position:absolute;left:0px;top:551.7px;width:886px;height:67.3px;background:#f8f8f8;"></div><div style="position:absolute;left:886px;top:597.2px;width:77px;height:21.8px;background:#f8f8f8;"></div><div style="position:absolute;left:0px;top:551.7px;width:640px;height:2px;background:#ececec;"></div><div style="position:absolute;left:0px;top:553.6px;width:640px;height:18.9px;background:linear-gradient(#d8d8d8,#d2d2d2 70%,#bcbcbc 85%,#b4b4b4);"></div><div class="t" style="left:184.0px;top:556.00px;font-family:'Liberation Sans', sans-serif;font-size:12px;font-weight:normal;color:#2c2c2c;letter-spacing:0.325px;transform-origin:0 0;transform:scaleX(1.0519);">M: _vpmUIRunInDesignChecksActionCB</div><div style="position:absolute;left:622.4px;top:576.4px;width:1.2px;height:19.1px;background:#707070;"></div><div class="t" style="left:632.8px;top:580.00px;font-family:'Liberation Sans', sans-serif;font-size:12px;font-weight:normal;color:#2c2c2c;letter-spacing:0.000px;">C</div><div style="position:absolute;left:0px;top:597.2px;width:963px;height:1.8px;background:#484848;"></div><div style="position:absolute;left:0px;top:599px;width:963px;height:2.2px;background:#c8c8c8;"></div><div style="position:absolute;left:0px;top:601.2px;width:963px;height:2.4px;background:#5a8cc8;"></div><div style="position:absolute;left:0px;top:603.6px;width:434px;height:1.2px;background:#e4e4e4;"></div><div style="position:absolute;left:0px;top:604.8px;width:434px;height:2.6px;background:#b4b4b4;"></div><div style="position:absolute;left:434px;top:603.6px;width:529px;height:3.9px;background:#a6a69e;"></div><div style="position:absolute;left:886px;top:569px;width:77px;height:28.2px;background:#f8f8f8;"></div><div style="position:absolute;left:895.2px;top:575.3px;width:80px;height:19.2px;box-sizing:border-box;border-left:1px solid #444;border-top:1px solid #666"></div><div class="t" style="left:897.7px;top:580.00px;font-family:'Liberation Sans', sans-serif;font-size:12px;font-weight:normal;color:#2c2c2c;letter-spacing:0.000px;letter-spacing:1.05px">Free: 1.837</div><div class="t" style="left:884.0px;top:580.00px;font-family:'Liberation Sans', sans-serif;font-size:12px;font-weight:normal;color:#2c2c2c;letter-spacing:0.000px;">v</div><div style="position:absolute;left:886px;top:597.2px;width:77px;height:10.2px;background:linear-gradient(#c8c8c8 0,#c8c8c8 30%,#b0b0b0 30%,#b0b0b0 60%,#8c8c84 60%);"></div><div style="position:absolute;left:639.2px;top:255.2px;width:246.8px;height:352.2px;background:#f8f8f8;"></div><div style="position:absolute;left:639.2px;top:255.2px;width:246.8px;height:1.4px;background:#d40000;"></div><div style="position:absolute;left:639.3px;top:255.2px;width:1.3px;height:352.2px;background:#d40000;"></div><div style="position:absolute;left:884.6px;top:255.2px;width:1.4px;height:352.2px;background:#d40000;"></div><div style="position:absolute;left:642.1px;top:258.1px;width:242px;height:25.4px;background:#8a8a8a;"></div><div class="t" style="left:662.4px;top:265.00px;font-family:'Liberation Sans', sans-serif;font-size:12px;font-weight:normal;color:#ececec;letter-spacing:0.544px;transform-origin:0 0;transform:scaleX(1.0729);">Probe</div><div class="t" style="left:662.4px;top:291.00px;font-family:'Liberation Sans', sans-serif;font-size:12px;font-weight:normal;color:#2c2c2c;letter-spacing:0.282px;transform-origin:0 0;transform:scaleX(1.0463);">Remove All Probes</div><div class="t" style="left:662.4px;top:327.00px;font-family:'Liberation Sans', sans-serif;font-size:12px;font-weight:normal;color:#2c2c2c;letter-spacing:0.490px;transform-origin:0 0;transform:scaleX(1.0980);">Open (edit/current tab)</div><div class="t" style="left:662.4px;top:352.00px;font-family:'Liberation Sans', sans-serif;font-size:12px;font-weight:normal;color:#2c2c2c;letter-spacing:0.290px;transform-origin:0 0;transform:scaleX(1.0462);">Open...</div><div class="t" style="left:662.4px;top:388.00px;font-family:'Liberation Sans', sans-serif;font-size:12px;font-weight:normal;color:#2c2c2c;letter-spacing:0.271px;transform-origin:0 0;transform:scaleX(1.0440);">Zoom To Selected</div><div class="t" style="left:662.4px;top:413.00px;font-family:'Liberation Sans', sans-serif;font-size:12px;font-weight:normal;color:#2c2c2c;letter-spacing:0.428px;transform-origin:0 0;transform:scaleX(1.0652);">Check/Uncheck</div><div class="t" style="left:662.4px;top:438.00px;font-family:'Liberation Sans', sans-serif;font-size:12px;font-weight:normal;color:#2c2c2c;letter-spacing:0.324px;transform-origin:0 0;transform:scaleX(1.0616);">Set/Unset Highlight State</div><div class="t" style="left:662.4px;top:463.00px;font-family:'Liberation Sans', sans-serif;font-size:12px;font-weight:normal;color:#2c2c2c;letter-spacing:0.392px;transform-origin:0 0;transform:scaleX(1.0749);">Highlight Color</div><div class="t" style="left:662.4px;top:488.00px;font-family:'Liberation Sans', sans-serif;font-size:12px;font-weight:normal;color:#2c2c2c;letter-spacing:0.493px;transform-origin:0 0;transform:scaleX(1.0766);">Delete</div><div class="t" style="left:662.4px;top:525.00px;font-family:'Liberation Sans', sans-serif;font-size:12px;font-weight:normal;color:#a4a4a4;letter-spacing:0.382px;transform-origin:0 0;transform:scaleX(1.0663);">Select Nets</div><div class="t" style="left:662.4px;top:561.00px;font-family:'Liberation Sans', sans-serif;font-size:12px;font-weight:normal;color:#2c2c2c;letter-spacing:0.472px;transform-origin:0 0;transform:scaleX(1.0885);">View By...</div><div class="t" style="left:662.4px;top:586.00px;font-family:'Liberation Sans', sans-serif;font-size:12px;font-weight:normal;color:#2c2c2c;letter-spacing:0.371px;transform-origin:0 0;transform:scaleX(1.0695);">Options...</div><div class="t" style="left:828.4px;top:327.00px;font-family:'Liberation Sans', sans-serif;font-size:12px;font-weight:normal;color:#2c2c2c;letter-spacing:0.270px;transform-origin:0 0;transform:scaleX(1.0417);">Ctrl+E</div><div class="t" style="left:828.4px;top:561.00px;font-family:'Liberation Sans', sans-serif;font-size:12px;font-weight:normal;color:#2c2c2c;letter-spacing:0.316px;transform-origin:0 0;transform:scaleX(1.0492);">Ctrl+V</div><div style="position:absolute;left:644.8px;top:312.0px;width:235px;height:1.6px;background:#8c8c8c;"></div><div style="position:absolute;left:644.8px;top:373.5px;width:235px;height:1.6px;background:#8c8c8c;"></div><div style="position:absolute;left:644.8px;top:510.5px;width:235px;height:1.6px;background:#8c8c8c;"></div><div style="position:absolute;left:644.8px;top:546.4000000000001px;width:235px;height:1.6px;background:#8c8c8c;"></div><svg style="left:860px;top:260px" width="20" height="220" viewBox="860 260 20 220"><path d="M866.2,267.2L871.2,271L866.2,274.8Z" fill="#d00000"/><path d="M866.2,464.8L871,469.1L866.2,473.4Z" fill="#c00000"/></svg><div style="position:absolute;left:881.6px;top:258.8px;width:82px;height:107px;background:#f8f8f8;"></div><div style="position:absolute;left:881.6px;top:258.8px;width:82px;height:1.4px;background:#d40000;"></div><div style="position:absolute;left:881.6px;top:258.8px;width:1.4px;height:107px;background:#d40000;"></div><div style="position:absolute;left:881.6px;top:364.5px;width:82px;height:1.4px;background:#d40000;"></div><div class="t" style="left:904.7px;top:269.00px;font-family:'Liberation Sans', sans-serif;font-size:12px;font-weight:normal;color:#a8a8a8;letter-spacing:0.761px;transform-origin:0 0;transform:scaleX(1.0886);">Net</div><div class="t" style="left:904.7px;top:294.00px;font-family:'Liberation Sans', sans-serif;font-size:12px;font-weight:normal;color:#1a1a1a;letter-spacing:0.340px;transform-origin:0 0;transform:scaleX(1.0557);">Inst</div><div class="t" style="left:904.7px;top:319.00px;font-family:'Liberation Sans', sans-serif;font-size:12px;font-weight:normal;color:#a8a8a8;letter-spacing:0.506px;transform-origin:0 0;transform:scaleX(1.0859);">Driver</div><div class="t" style="left:904.7px;top:345.00px;font-family:'Liberation Sans', sans-serif;font-size:12px;font-weight:normal;color:#a8a8a8;letter-spacing:0.399px;transform-origin:0 0;transform:scaleX(1.0627);">Receiver</div>
</body></html>
